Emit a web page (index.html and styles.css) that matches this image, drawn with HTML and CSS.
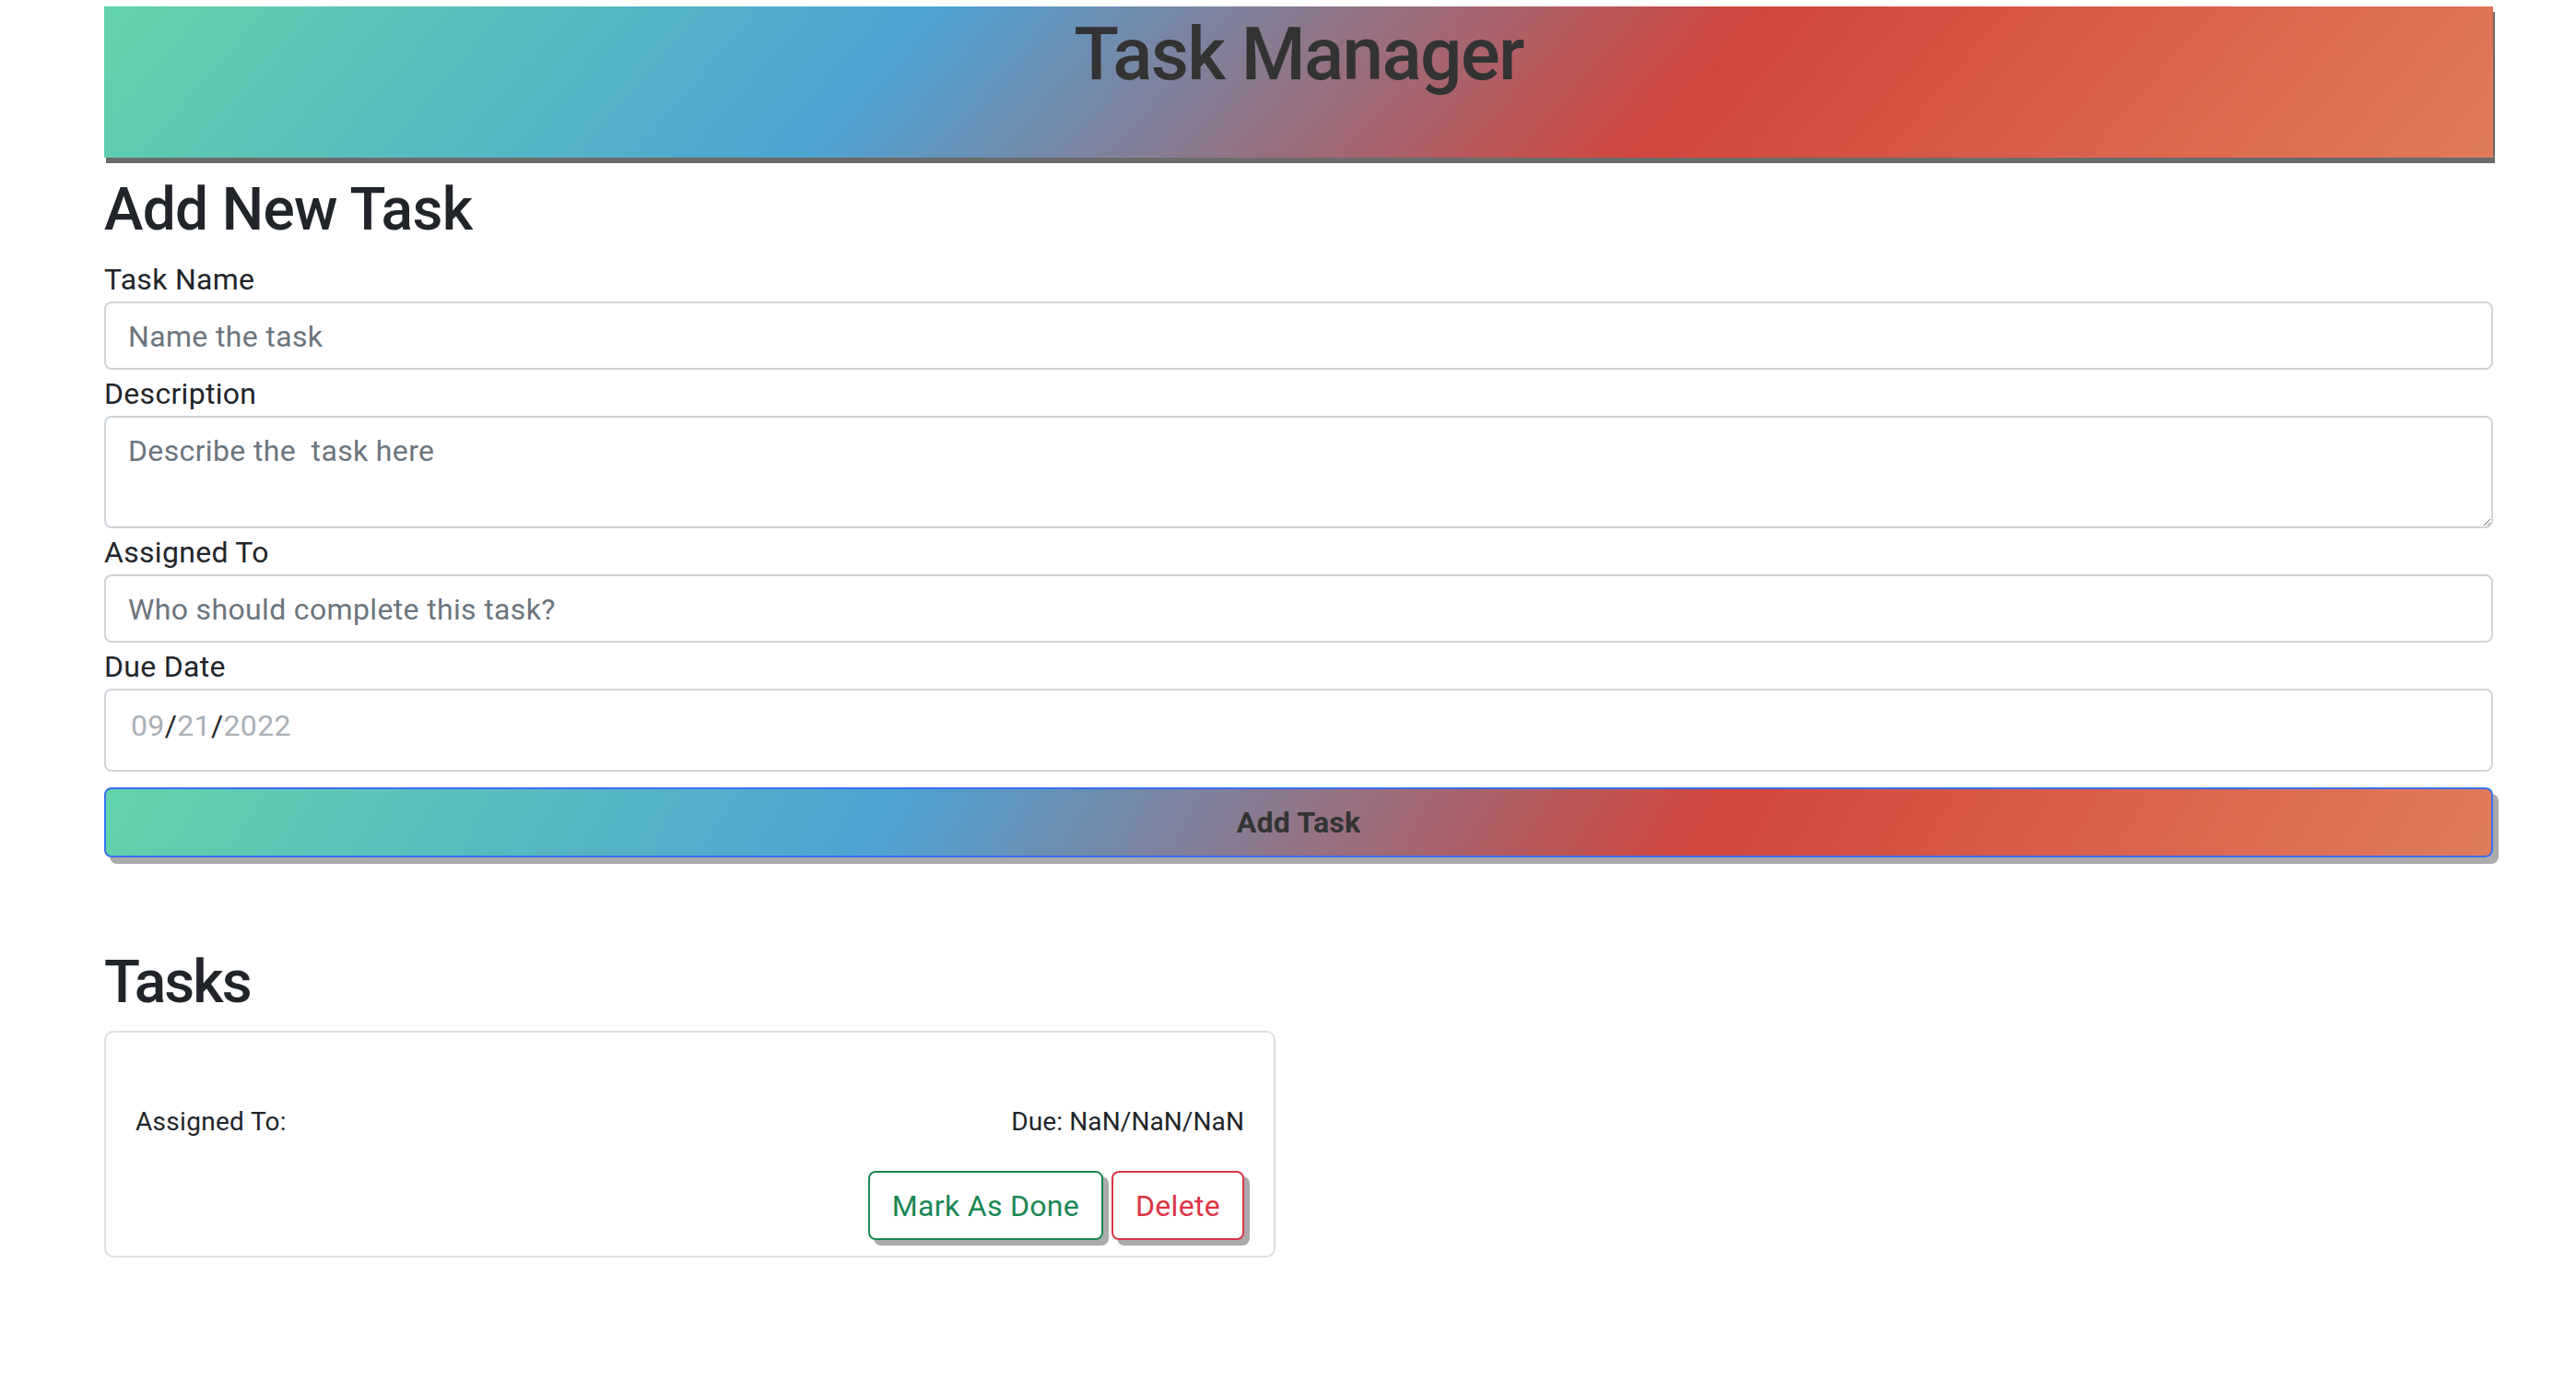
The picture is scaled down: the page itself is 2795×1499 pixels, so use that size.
FILE: index.html
```html
<!DOCTYPE html>
<html lang="en">
<head>
<meta charset="utf-8">
<title>Task Manager</title>
<link rel="stylesheet" href="styles.css">
</head>
<body>
<div class="page">
  <header class="banner">
    <h1 class="banner-title">Task Manager</h1>
  </header>

  <section class="new-task">
    <h2 class="section-title">Add New Task</h2>
    <form class="task-form">
      <label class="field-label" for="name">Task Name</label>
      <input class="field" id="name" type="text" placeholder="Name the task">

      <label class="field-label" for="desc">Description</label>
      <textarea class="field field-area" id="desc" placeholder="Describe the  task here"></textarea>

      <label class="field-label" for="who">Assigned To</label>
      <input class="field" id="who" type="text" placeholder="Who should complete this task?">

      <label class="field-label" for="due">Due Date</label>
      <div class="field field-date" id="due"><span class="date-part">09</span><span class="date-sep">/</span><span class="date-part">21</span><span class="date-sep">/</span><span class="date-part">2022</span></div>

      <button class="add-btn" type="button">Add Task</button>
    </form>
  </section>

  <section class="tasks">
    <h2 class="section-title tasks-title">Tasks</h2>
    <div class="task-card">
      <div class="task-spacer"></div>
      <div class="task-meta">
        <span>Assigned To:</span>
        <span class="due">Due: NaN/NaN/NaN</span>
      </div>
      <div class="task-actions">
        <button class="btn btn-done" type="button">Mark As Done</button>
        <button class="btn btn-delete" type="button">Delete</button>
      </div>
    </div>
  </section>
</div>
</body>
</html>
```
FILE: styles.css
```css
* { box-sizing: border-box; }

html, body {
  margin: 0;
  background: #fff;
}

body {
  font-family: Roboto, "Liberation Sans", Arial, sans-serif;
  font-size: 32px;
  line-height: 48px;
  letter-spacing: 0.3px;
  color: #212529;
}

.page {
  width: 2592px;
  margin-left: 113px;
  padding-top: 7px;
}

.banner {
  height: 164px;
  padding-top: 4px;
  background: linear-gradient(131deg, #62d4aa 0%, #4ea3d3 33%, #d3463d 66%, #e07c5a 100%);
  box-shadow: 2px 6px 0 #6b6b6b;
}

.banner-title {
  margin: 0;
  font-size: 80px;
  line-height: 96px;
  font-weight: 500;
  letter-spacing: -1.6px;
  text-align: center;
  color: #333;
}

.section-title {
  margin: 18px 0 13px;
  font-size: 64px;
  line-height: 77px;
  font-weight: 500;
  letter-spacing: -0.7px;
  color: #212529;
}

.task-form {
  display: flex;
  flex-direction: column;
}

.field-label {
  display: block;
  margin-top: 2px;
  line-height: 48px;
}

.field-label:first-child {
  margin-top: 0;
}

.field {
  display: block;
  width: 100%;
  height: 74px;
  padding: 12px 24px 10px;
  font-family: inherit;
  font-size: 32px;
  line-height: 48px;
  letter-spacing: 0.35px;
  color: #212529;
  background: #fff;
  border: 2px solid #ced4da;
  border-radius: 8px;
  outline: none;
}

.field::placeholder {
  color: #6c757d;
  opacity: 1;
}

.field-area {
  height: 122px;
  resize: vertical;
}

.field-date {
  height: 90px;
  padding: 14px 24px 24px 27px;
}

.date-part { color: #aab0b6; }
.date-sep { color: #212529; }

.add-btn {
  margin-top: 17px;
  height: 76px;
  width: 100%;
  padding: 0;
  font-family: inherit;
  font-size: 32px;
  font-weight: 700;
  letter-spacing: 0.2px;
  color: #333;
  background: linear-gradient(120deg, #62d4aa 0%, #4ea3d3 33%, #d3463d 67%, #e07c5a 100%);
  border: 2px solid #3a6ff2;
  border-radius: 8px;
  box-shadow: 6px 7px 0 #aaa;
}

.tasks-title {
  margin-top: 97px;
  margin-bottom: 14px;
  letter-spacing: -2px;
}

.task-card {
  width: 1271px;
  padding: 32px 32px 17px;
  border: 2px solid #dfdfdf;
  border-radius: 10px;
}

.task-spacer {
  height: 44px;
}

.task-meta {
  display: flex;
  justify-content: space-between;
  font-size: 28px;
  line-height: 42px;
  letter-spacing: 0.3px;
  color: #212529;
}

.task-meta .due {
  letter-spacing: 0.1px;
}

.task-actions {
  margin-top: 32px;
  display: flex;
  justify-content: flex-end;
  gap: 9px;
}

.btn {
  height: 75px;
  padding: 0 24px;
  font-family: inherit;
  font-size: 32px;
  line-height: 48px;
  letter-spacing: 0.3px;
  background: #fff;
  border: 2px solid;
  border-radius: 8px;
  box-shadow: 6px 6px 0 #aaa;
}

.btn-done {
  color: #198754;
  border-color: #198754;
}

.btn-delete {
  color: #dc3545;
  border-color: #dc3545;
}
```
